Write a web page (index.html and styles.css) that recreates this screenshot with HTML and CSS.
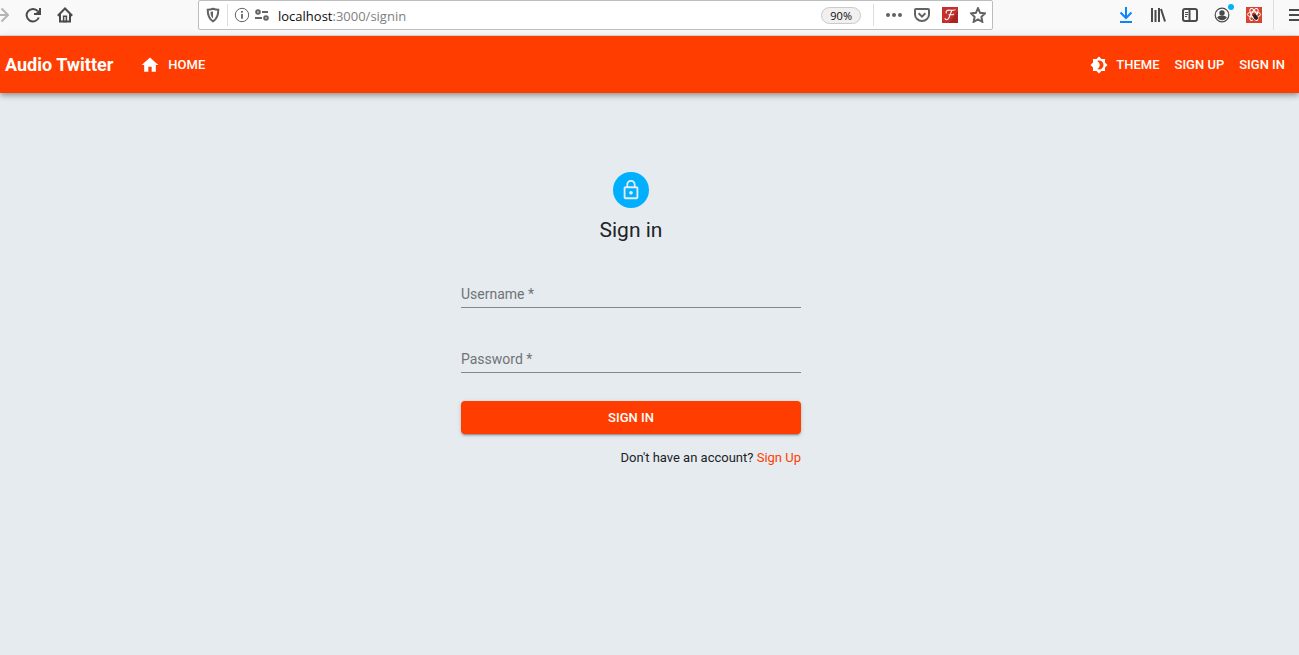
FILE: index.html
```html
<!DOCTYPE html>
<html lang="en">
<head>
<meta charset="utf-8">
<meta name="viewport" content="width=device-width, initial-scale=1">
<title>Audio Twitter - Sign in</title>
<link rel="stylesheet" href="styles.css">
</head>
<body>
<div class="browser">
  <div class="browser-nav">
    <button class="tool tool-forward" type="button" aria-label="Forward"><svg class="glyph faded" viewBox="0 0 16 16"><path d="M0 8h15M8.500 1.500L15 8l-6.500 6.500"/></svg></button>
    <button class="tool" type="button" aria-label="Reload"><svg class="glyph" viewBox="0 0 16 16"><path d="M12.800 4.200A6.300 6.300 0 1 0 13.800 10.500"/><path d="M15 1v6H9"/><path d="M14.500 2.500v4H10.500z" fill="currentColor" stroke="none"/></svg></button>
    <button class="tool" type="button" aria-label="Browser home"><svg class="glyph" viewBox="0 0 16 16"><path d="M.8 8.700L8 1.500l7.200 7.200M3 7v7.500h10V7"/><path d="M6.600 14.500V9.300h2.800v5.200z" stroke-width="1.500"/></svg></button>
  </div>
  <div class="urlbar">
    <button class="tool shield" type="button" aria-label="Protection"><svg class="glyph" viewBox="0 0 16 16"><path d="M8 1.700c2 .7 3.700 1 5.300 1.100 0 5.500-1 9.200-5.300 11.500C3.700 12 2.700 8.300 2.700 2.800 4.300 2.700 6 2.400 8 1.700z"/><path d="M8 4.300v7.200C6.200 10 5.600 8 5.500 4.900z" fill="currentColor" stroke="none"/></svg></button>
    <span class="divider"></span>
    <button class="tool info" type="button" aria-label="Site information"><svg class="glyph thin" viewBox="0 0 16 16"><circle cx="8" cy="8" r="6.700"/><path d="M8 7v4.800M8 4v1.800" stroke-width="1.800"/></svg></button>
    <button class="tool perms" type="button" aria-label="Permissions"><svg class="glyph" viewBox="0 0 16 16"><circle cx="4" cy="5" r="1.800"/><path d="M8 5h6M1 11h7"/><circle cx="12" cy="11" r="1.800"/></svg></button>
    <span class="address">localhost<span class="address-path">:3000/signin</span></span>
    <button class="zoom" type="button">90%</button>
    <span class="divider"></span>
    <div class="page-actions">
      <button class="tool" type="button" aria-label="Page actions"><svg class="glyph" viewBox="0 0 16 16"><g fill="currentColor" stroke="none"><circle cx="2" cy="8" r="2"/><circle cx="8" cy="8" r="2"/><circle cx="14" cy="8" r="2"/></g></svg></button>
      <button class="tool" type="button" aria-label="Save to Pocket"><svg class="glyph" viewBox="0 0 16 16"><path d="M2 2h12q1 0 1 1v4.500a7 6.500 0 0 1-14 0V3q0-1 1-1z"/><path d="M4.600 6.300L8 9.600l3.400-3.300"/></svg></button>
      <button class="tool" type="button" aria-label="Font extension"><svg class="glyph" viewBox="0 0 16 16"><path d="M0 0h16v16H0z" fill="#c4302b" stroke="none"/><path d="M16 4v12H7z" fill="#a82420" stroke="none"/><path d="M4.500 6.500C3 4.500 5 2.800 8 3.200s4 .3 5.500-.6M9.800 3.500C8.500 6 8 9 6.500 11.500 5.500 13.200 3 13 3 11.300M6.500 7.800h4.500l.8-1" stroke="#fff" stroke-width="1.100"/></svg></button>
      <button class="tool" type="button" aria-label="Bookmark"><svg class="glyph" viewBox="0 0 16 16"><path d="M8 1.200l2.100 4.600 4.900.6-3.600 3.400.9 5L8 12.400l-4.300 2.400.9-5L1 6.400l4.900-.6z"/></svg></button>
    </div>
  </div>
  <div class="browser-tools">
    <button class="tool download" type="button" aria-label="Downloads"><svg class="glyph" viewBox="0 0 16 16"><path d="M8 0v10.500M2.500 5.500L8 11l5.500-5.500M2 15h12"/></svg></button>
    <button class="tool" type="button" aria-label="Library"><svg class="glyph" viewBox="0 0 16 16"><path d="M2 1v14M5.500 3v12M9 1v14M11 2l4 12.500"/></svg></button>
    <button class="tool" type="button" aria-label="Sidebars"><svg class="glyph" viewBox="0 0 16 16"><rect x="1" y="2" width="14" height="12" rx="2"/><path d="M7.500 2v12"/><path d="M3 5.500h3M3 7.500h3M3 9.500h2" stroke-width="1"/></svg></button>
    <button class="tool account" type="button" aria-label="Account"><svg class="glyph" viewBox="0 0 16 16"><circle cx="8" cy="8" r="6.800" stroke-width="1.200"/><circle cx="8" cy="6" r="2.700" fill="currentColor" stroke="none"/><path d="M3.200 10.500c1-1.600 2.500-1.800 4.800-1.800s3.800.2 4.800 1.800c-2.300 3.600-7.300 3.600-9.600 0z" fill="currentColor" stroke="none"/></svg><span class="badge"></span></button>
    <button class="tool" type="button" aria-label="Developer tools extension"><svg class="glyph" viewBox="0 0 16 16"><path d="M0 0h16v16H0z" fill="#d9432f" stroke="none"/><g stroke="#fff" stroke-width="1"><ellipse cx="8" cy="7.500" rx="6.600" ry="2.600"/><ellipse cx="8" cy="7.500" rx="6.600" ry="2.600" transform="rotate(60 8 7.500)"/><ellipse cx="8" cy="7.500" rx="6.600" ry="2.600" transform="rotate(120 8 7.500)"/></g><ellipse cx="9.500" cy="10" rx="2" ry="2.800" fill="#222" stroke="none" transform="rotate(-30 9.500 10)"/><path d="M6.500 8.500l6 3.500M12.500 8l-5.500 5M7.500 6.500l1 1.500" stroke="#222" stroke-width=".8"/></svg></button>
  </div>
  <div class="menu">
    <button class="tool" type="button" aria-label="Open menu"><svg class="glyph" viewBox="0 0 16 16"><path d="M1 3h14M1 8h14M1 13h14"/></svg></button>
  </div>
</div>

<header class="appbar">
  <h1 class="brand">Audio Twitter</h1>
  <a class="nav-link" href="#home"><svg class="home-icon" viewBox="0 0 24 24"><path d="M10 20v-6h4v6h5v-8h3L12 3 2 12h3v8z"/></svg>Home</a>
  <nav class="account-nav">
    <button class="nav-link" type="button"><svg class="theme-icon" viewBox="0 0 24 24"><path d="M20 8.690V4h-4.690L12 .69 8.690 4H4v4.690L.69 12 4 15.310V20h4.690L12 23.310 15.310 20H20v-4.690L23.310 12 20 8.690zM12 18c-.89 0-1.740-.2-2.500-.55C11.560 16.500 13 14.420 13 12s-1.440-4.500-3.500-5.450C10.260 6.200 11.110 6 12 6c3.310 0 6 2.690 6 6s-2.690 6-6 6z"/></svg>Theme</button>
    <a class="nav-link" href="#signup">Sign up</a>
    <a class="nav-link" href="#signin">Sign in</a>
  </nav>
</header>

<main class="page">
  <form class="signin">
    <div class="avatar"><svg class="lock" viewBox="0 0 24 24"><path d="M12 17c1.100 0 2-.9 2-2s-.9-2-2-2-2 .9-2 2 .9 2 2 2zm6-9h-1V6c0-2.760-2.240-5-5-5S7 3.240 7 6v2H6c-1.100 0-2 .9-2 2v10c0 1.100.9 2 2 2h12c1.100 0 2-.9 2-2V10c0-1.100-.9-2-2-2zM8.900 6c0-1.710 1.390-3.100 3.100-3.100s3.100 1.390 3.100 3.100v2H8.900V6zM18 20H6V10h12v10z"/></svg></div>
    <h2 class="title">Sign in</h2>
    <div class="field">
      <input class="field-input" id="username" type="text" placeholder=" " required>
      <label class="field-label" for="username">Username *</label>
    </div>
    <div class="field">
      <input class="field-input" id="password" type="password" placeholder=" " required>
      <label class="field-label" for="password">Password *</label>
    </div>
    <button class="submit" type="submit">Sign in</button>
    <p class="signup">Don't have an account? <a class="signup-link" href="#signup">Sign Up</a></p>
  </form>
</main>
</body>
</html>
```

FILE: styles.css
```css
* { box-sizing: border-box; }

body {
  margin: 0;
  background: #e6ebef;
  color: #202326;
  font-family: Roboto, sans-serif;
  overflow-x: hidden;
}

button, input { font: inherit; color: inherit; }

/* Browser toolbar */
.browser {
  display: flex;
  height: 36px;
  padding-bottom: 5px;
  background: #f9f9fa;
  border-bottom: 1px solid #dcdcdc;
  color: #4a4a4b;
}

.browser-nav {
  display: flex;
  flex: none;
  gap: 16px;
  width: 198px;
  margin-left: -7px;
  margin-right: 7px;
  align-items: center;
}

.tool {
  display: flex;
  flex: none;
  padding: 0;
  border: 0;
  background: none;
}

.glyph {
  width: 16px;
  height: 16px;
  fill: none;
  stroke: currentColor;
  stroke-width: 2;
}

.glyph.thin { stroke-width: 1; }
.faded { color: #b5b5b6; }

.urlbar {
  display: flex;
  flex: 1;
  align-items: center;
  padding: 0 6px;
  background: #fff;
  border: 1px solid #bdbdbe;
  border-radius: 2px;
  color: #636364;
}

.divider {
  flex: none;
  width: 1px;
  height: 22px;
  background: #dededf;
}

.shield { margin-right: 6px; }
.info { margin-left: 6px; }
.perms { margin: 0 8px 0 4px; }

.address {
  flex: 1;
  padding-top: 2px;
  color: #0c0c0d;
  font: 13px/20px "Open Sans", sans-serif;
}

.address-path { color: #808081; }

.zoom {
  height: 17px;
  margin-right: 12px;
  padding: 0 8px;
  border: 1px solid #cacacb;
  border-radius: 9px;
  background: #f0f0f1;
  color: #0c0c0d;
  font: 11px/15px "Open Sans", sans-serif;
}

.page-actions {
  display: flex;
  gap: 12px;
  margin-left: 12px;
}

.browser-tools {
  display: flex;
  flex: none;
  gap: 16px;
  align-items: center;
  margin-left: 125px;
  padding-right: 11px;
}

.download { color: #0a84ff; }
.account { position: relative; }

.badge {
  position: absolute;
  top: -3px;
  right: -4px;
  width: 6px;
  height: 6px;
  border-radius: 50%;
  background: #00b3f4;
}

.menu {
  display: flex;
  flex: none;
  align-items: center;
  width: 26px;
  padding-left: 14px;
  border-left: 1px solid #dededf;
  overflow: hidden;
}

/* Application bar */
.appbar {
  display: flex;
  align-items: center;
  height: 57px;
  padding: 0 14px 0 5px;
  background: #ff3d00;
  color: #fff;
  box-shadow: 0 2px 4px -1px rgba(0, 0, 0, .2), 0 4px 5px rgba(0, 0, 0, .14), 0 1px 9px rgba(0, 0, 0, .12);
}

.brand {
  margin: 0 27px 0 0;
  font-size: 18px;
  font-weight: 700;
  line-height: 24px;
}

.nav-link {
  display: flex;
  align-items: center;
  gap: 8px;
  padding: 0;
  border: 0;
  background: none;
  color: #fff;
  font-size: 13px;
  font-weight: 500;
  line-height: 24px;
  text-decoration: none;
  text-transform: uppercase;
}

.home-icon {
  width: 20px;
  height: 20px;
  fill: currentColor;
}

.theme-icon {
  width: 18px;
  height: 18px;
  fill: currentColor;
}

.account-nav {
  display: flex;
  gap: 15px;
  margin-left: auto;
}

/* Sign-in form */
.page {
  display: flex;
  justify-content: center;
  padding: 79px 37px 24px 0;
}

.signin {
  display: flex;
  flex-direction: column;
  width: 100%;
  max-width: 340px;
}

.avatar {
  display: flex;
  align-self: center;
  align-items: center;
  justify-content: center;
  width: 36px;
  height: 36px;
  border-radius: 50%;
  background: #00b0ff;
}

.lock {
  width: 22px;
  height: 22px;
  fill: #e6ebef;
}

.title {
  margin: 8px 0 36px;
  font-size: 21px;
  font-weight: 400;
  line-height: 28px;
  text-align: center;
}

.field {
  position: relative;
  margin-bottom: 37px;
}

.field-input {
  display: block;
  width: 100%;
  height: 28px;
  padding: 0;
  border: 0;
  border-bottom: 1px solid #83878a;
  border-radius: 0;
  outline: 0;
  background: none;
  font-size: 14px;
}

.field-label {
  position: absolute;
  top: 4px;
  left: 0;
  color: #707376;
  font-size: 14px;
  line-height: 20px;
  pointer-events: none;
}

.field-input:focus + .field-label,
.field-input:not(:placeholder-shown) + .field-label {
  top: -14px;
  font-size: 11px;
}

.submit {
  height: 33px;
  margin-top: -9px;
  padding: 0 16px;
  border: 0;
  border-radius: 4px;
  background: #ff3d00;
  color: #fff;
  box-shadow: 0 3px 1px -2px rgba(0, 0, 0, .2), 0 2px 2px rgba(0, 0, 0, .14), 0 1px 5px rgba(0, 0, 0, .12);
  font-size: 13px;
  font-weight: 500;
  text-transform: uppercase;
}

.signup {
  margin: 14px 0 0;
  font-size: 13px;
  line-height: 20px;
  text-align: right;
}

.signup-link {
  color: #ff3d00;
  text-decoration: none;
}
```
